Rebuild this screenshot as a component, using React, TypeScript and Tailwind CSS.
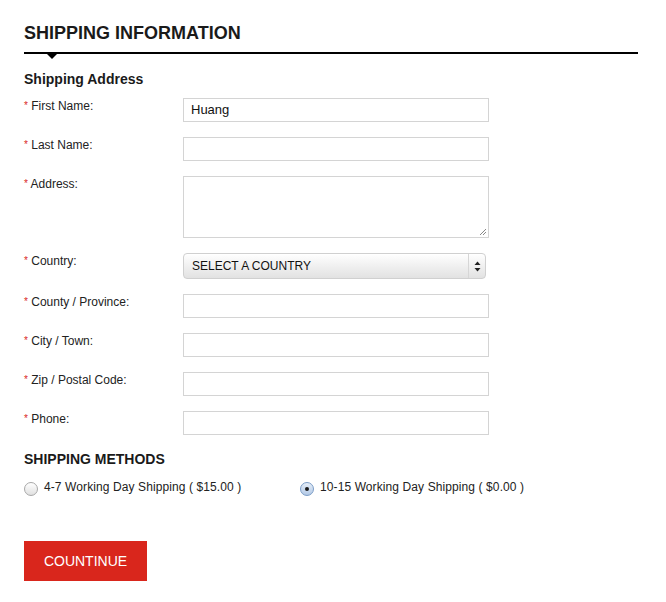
import React from "react";

const FIELDS = [
  { label: "First Name:", value: "Huang" },
  { label: "Last Name:", value: "" },
  { label: "Address:", kind: "textarea" },
  { label: "Country:", kind: "select" },
  { label: "County / Province:", value: "" },
  { label: "City / Town:", value: "" },
  { label: "Zip / Postal Code:", value: "" },
  { label: "Phone:", value: "" },
];

function Label({ text }: { text: string }) {
  return (
    <div className="mt-[1px] w-[159px] shrink-0 text-[12px] leading-[14px] text-[#222]">
      <span className="relative -top-[1px] text-[10px] text-[#d9261c]">*</span> {text}
    </div>
  );
}

function SelectBox() {
  return (
    <div className="flex h-[26px] w-[303px] items-stretch rounded-[4px] border border-[#d0d0d0] bg-gradient-to-b from-[#ffffff] via-[#f0f0f0] to-[#e2e2e2] text-[12px] text-[#111] shadow-[inset_0_1px_0_#fff]">
      <span className="flex flex-1 items-center pl-[8px]">SELECT A COUNTRY</span>
      <span className="flex w-[17px] items-center justify-center border-l border-[#d6d6d6]">
        <svg width="7" height="11" viewBox="0 0 7 11">
          <path d="M3.5 0.5 L6.5 4 L0.5 4 Z" fill="#222" />
          <path d="M3.5 10.5 L6.5 7 L0.5 7 Z" fill="#222" />
        </svg>
      </span>
    </div>
  );
}

function Radio({ checked }: { checked?: boolean }) {
  return checked ? (
    <span className="mt-[3px] flex h-[14px] w-[14px] items-center justify-center rounded-full border border-[#7a9cc6] bg-gradient-to-b from-[#e6eef8] to-[#b3c9e6]">
      <span className="h-[4px] w-[4px] rounded-full bg-[#1a1a1a]" />
    </span>
  ) : (
    <span className="mt-[3px] h-[14px] w-[14px] rounded-full border border-[#a8a8a8] bg-gradient-to-b from-[#ffffff] to-[#e0e0e0]" />
  );
}

export default function App() {
  return (
    <div
      className="min-h-[602px] bg-white px-[24px] pt-[22px] text-[#222]"
      style={{ fontFamily: '"Liberation Sans", Arial, sans-serif' }}
    >
      <h1 className="text-[18px] font-bold leading-[22px] text-[#1a1a1a]">
        SHIPPING INFORMATION
      </h1>
      <div className="relative mt-[8px] h-[2px] w-[614px] bg-black">
        <div className="absolute left-[23px] top-[2px] h-0 w-0 border-x-[5px] border-t-[5px] border-x-transparent border-t-black" />
      </div>

      <h2 className="mt-[17px] text-[14px] font-bold leading-[16px] text-[#1a1a1a]">
        Shipping Address
      </h2>

      <div className="mt-[11px] flex flex-col gap-[15px]">
        {FIELDS.map((f) => (
          <div key={f.label} className="flex items-start">
            <Label text={f.label} />
            {f.kind === "textarea" ? (
              <div className="relative h-[62px] w-[306px] border border-[#d4d4d4] bg-white">
                <svg
                  className="absolute bottom-[2px] right-[2px]"
                  width="7"
                  height="7"
                  viewBox="0 0 7 7"
                >
                  <path d="M1 7 L7 1 M4 7 L7 4" stroke="#888" strokeWidth="1" />
                </svg>
              </div>
            ) : f.kind === "select" ? (
              <SelectBox />
            ) : (
              <div className="flex h-[24px] w-[306px] items-center border border-[#d4d4d4] bg-white px-[7px] text-[13px] text-[#111]">
                {f.value}
              </div>
            )}
          </div>
        ))}
      </div>

      <h2 className="mt-[16px] text-[14px] font-bold leading-[16px] text-[#1a1a1a]">
        SHIPPING METHODS
      </h2>
      <div className="mt-[12px] flex items-start text-[12px] leading-[16px] text-[#222]">
        <label className="flex w-[276px] items-start gap-[6px]">
          <Radio />
          <span className="tracking-[0.1px]">4-7 Working Day Shipping ( $15.00 )</span>
        </label>
        <label className="flex items-start gap-[6px]">
          <Radio checked />
          <span className="tracking-[0.1px]">10-15 Working Day Shipping ( $0.00 )</span>
        </label>
      </div>

      <button className="mt-[45px] flex h-[40px] w-[123px] items-center justify-center bg-[#d9261c] text-[14px] text-white">
        COUNTINUE
      </button>
    </div>
  );
}
